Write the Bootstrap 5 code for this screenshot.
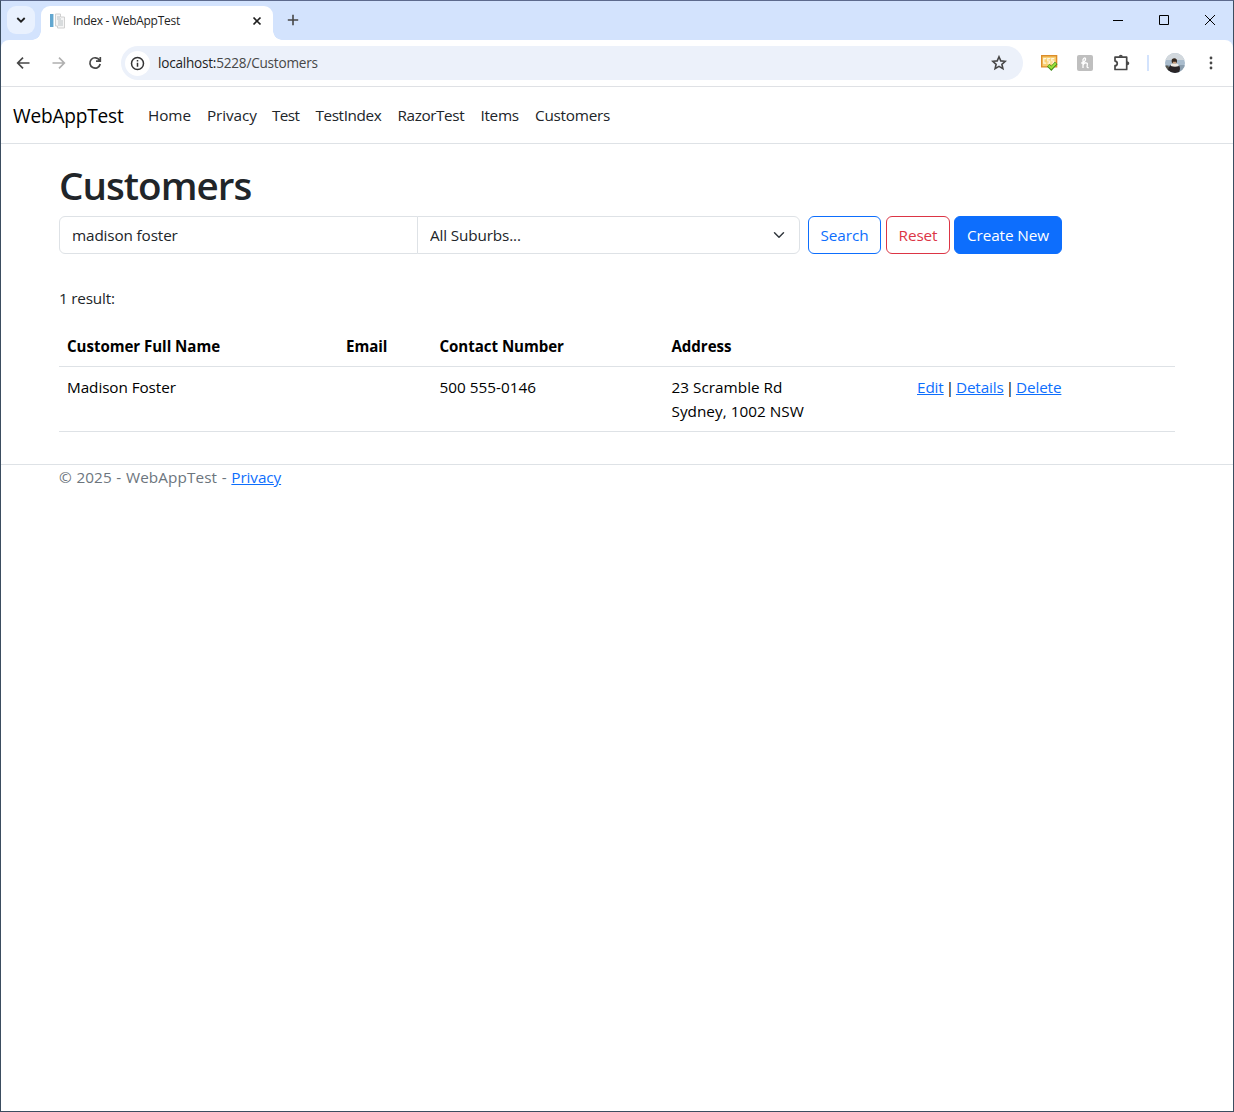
<!DOCTYPE html>
<html lang="en">
<head>
<meta charset="utf-8">
<meta name="viewport" content="width=device-width, initial-scale=1">
<title>Index - WebAppTest</title>
<link rel="stylesheet" href="https://cdn.jsdelivr.net/npm/bootstrap@5.3.0/dist/css/bootstrap.min.css">
<style>
:root { --bs-font-sans-serif: "Open Sans", "Noto Sans", sans-serif; }
body { font-family: "Open Sans", "Noto Sans", sans-serif; font-size: 15.3px; line-height: 24px; letter-spacing: -.08px; overflow: hidden; }
svg { display: block; flex: none; }
.app-window { height: 1112px; border: 1px solid #3b4d60; border-top-color: #5d6a8d; }
.tab-strip { height: 39px; background: #d3e3fd; font-size: 12px; letter-spacing: -.28px; line-height: 16px; }
.tab-menu { width: 28px; height: 28px; margin: 5px 6px 0 6px; border-radius: 9px; background: #e9f1fe; }
.page-tab { width: 232px; height: 34px; margin-top: 5px; border-radius: 9px 9px 0 0; background: #fff; padding: 0 11px 5px 9px; position: relative; color: #1f1f1f; }
.page-tab::before, .page-tab::after { content: ""; position: absolute; bottom: 0; width: 9px; height: 9px; }
.page-tab::before { left: -9px; background: radial-gradient(circle at 0 0, transparent 8.5px, #fff 9px); }
.page-tab::after { right: -9px; background: radial-gradient(circle at 100% 0, transparent 8.5px, #fff 9px); }
.page-icon { margin-right: 7px; }
.new-tab { margin: 13px 0 0 14px; }
.win-btn { width: 46px; height: 38px; }
.tool-wrap { background: #d3e3fd; }
.toolbar-row { height: 47px; background: #fff; border-bottom: 1px solid #dfe1e5; border-radius: 8px 8px 0 0; padding: 0 14px; }
.gap-tool { margin-left: 20px; }
.address-pill { width: 902px; height: 34px; border-radius: 17px; background: #ecf1fa; margin-left: 18px; padding: 0 16px 0 4px; font-size: 13.6px; letter-spacing: -.23px; color: #474747; }
.address-pill b { font-weight: 400; color: #1f1f1f; }
.info-dot { width: 25px; height: 25px; border-radius: 50%; background: #fff; margin-right: 8px; }
.tool-divider { width: 2px; height: 16px; margin: 0 16px; background: #d3e3fd; }
.site-nav { height: 57px; }
.navbar-brand { width: 111px; font-size: 19.1px; white-space: nowrap; letter-spacing: -.2px; padding-top: 7px; }
.site-nav .nav-link { color: #212529; white-space: nowrap; }
.site-nav .nav-item { letter-spacing: -.35px; }
.site-nav .nav-item:nth-child(1) { width: 59px; letter-spacing: -.08px; }
.site-nav .nav-item:nth-child(2) { width: 65px; letter-spacing: -.1px; }
.site-nav .nav-item:nth-child(3) { width: 43.5px; letter-spacing: -.6px; }
.site-nav .nav-item:nth-child(4) { width: 82px; letter-spacing: -.4px; }
.site-nav .nav-item:nth-child(5) { width: 83px; letter-spacing: -.4px; }
.site-nav .nav-item:nth-child(6) { width: 54.5px; letter-spacing: -.3px; }
.site-nav .nav-item:nth-child(7) { letter-spacing: -.24px; }
h1 { font-weight: 600; font-size: 38.6px; line-height: 50px !important; height: 48px; letter-spacing: -.98px; }
.filter-box { width: 741px; height: 38px; margin-right: 8px; }
.filter-box .form-control { flex: 0 0 359px; }
.form-control, .form-select, .btn { font-size: 15.3px; line-height: 24px; letter-spacing: -.14px; }
.form-control, .form-select { border-color: #dee2e6; height: 38px; }
.btn { padding-left: 0; padding-right: 0; white-space: nowrap; letter-spacing: -.08px; }
.b-search { width: 73px; margin-right: 5px; }
.b-reset { width: 64px; margin-right: 4px; }
.b-create { width: 108px; }
.count-line { letter-spacing: -.2px; }
.results { table-layout: fixed; color: #000; }
.results th { font-size: 15.1px; letter-spacing: -.05px; }
.results td:nth-child(n+3) { letter-spacing: .02px; }
.results td.row-links { word-spacing: -1.9px; letter-spacing: -.12px; }
.site-foot { color: #6c757d; word-spacing: .5px; letter-spacing: .1px; }
.site-foot a { letter-spacing: -.1px; }
</style>
<script src="https://cdn.jsdelivr.net/npm/bootstrap@5.3.0/dist/js/bootstrap.bundle.min.js"></script>
</head>
<body>
<div class="app-window">
  <div class="tab-strip d-flex">
    <div class="tab-menu d-flex align-items-center justify-content-center"><svg width="10" height="8" fill="none" stroke="#1f1f1f" stroke-width="1.8"><path d="M1.3 2 5 5.7 8.7 2"/></svg></div>
    <div class="page-tab d-flex align-items-center">
      <svg width="16" height="16" class="page-icon"><path d="M0 1h3v13H0z" fill="#62a7d0"/><path d="M3 1h1v13H3z" fill="#bbd9e8"/><path d="M5.5 1h5v3h4v11h-7v-2h-2z" fill="#f5f5f5" stroke="#d0d0d0"/><path d="M7 4h3M7 6h4M8 8h5M8 10h5M8 12h5" stroke="#bcc3c6"/></svg>
      <span class="flex-grow-1">Index - WebAppTest</span>
      <svg width="10" height="10" stroke="#1f1f1f" stroke-width="1.7"><path d="m1.5 1.5 7 7m0-7-7 7"/></svg>
    </div>
    <svg width="12" height="12" class="new-tab" stroke="#474747" stroke-width="1.6"><path d="M6 .8v10.4M.8 6h10.4"/></svg>
    <div class="d-flex ms-auto">
      <div class="win-btn d-flex align-items-center justify-content-center"><svg width="10" height="10" stroke="#000"><path d="M0 5.5h10"/></svg></div>
      <div class="win-btn d-flex align-items-center justify-content-center"><svg width="10" height="10" fill="none" stroke="#000"><path d="M.5.5h9v9h-9z"/></svg></div>
      <div class="win-btn d-flex align-items-center justify-content-center"><svg width="10" height="10" stroke="#000"><path d="m0 0 10 10m0-10L0 10"/></svg></div>
    </div>
  </div>
  <div class="tool-wrap">
    <div class="toolbar-row d-flex align-items-center">
      <svg width="16" height="16" fill="none" stroke="#474747" stroke-width="1.7"><path d="M14.5 8H3M8 2.7 2.7 8 8 13.3"/></svg>
      <svg width="16" height="16" class="gap-tool" fill="none" stroke="#b0b0b0" stroke-width="1.7"><path d="M1.5 8H13M8 2.7 13.3 8 8 13.3"/></svg>
      <svg width="16" height="16" class="gap-tool" fill="none" stroke="#474747" stroke-width="1.7"><path d="M12.5 5.2A5.2 5.2 0 1 0 13.2 9M13.3 1.9v4.3H9"/></svg>
      <div class="address-pill d-flex align-items-center">
        <div class="info-dot d-flex align-items-center justify-content-center"><svg width="15" height="15" fill="none" stroke="#333" stroke-width="1.5"><circle cx="7.5" cy="7.5" r="6"/><path d="M7.5 6.7v4M7.5 4.1v1.5"/></svg></div>
        <span class="flex-grow-1"><b>localhost:</b>5228/Customers</span>
        <svg width="16" height="16" fill="none" stroke="#474747" stroke-width="1.6"><path d="m8 1.8 1.8 4.1 4.5.4-3.4 3 1 4.4L8 11.4l-3.9 2.3 1-4.4-3.4-3 4.5-.4z"/></svg>
      </div>
      <svg width="17" height="17" style="margin-left:18px"><path d="M.7.7h14.9v11.2H.7z" fill="#f9cf72" stroke="#dc8d29" stroke-width="1.4"/><path d="M5.3 3.7H2.8v4.5h2.5M9.3 3.7H6.8V6h2v2.2H6.5M13.3 3.7h-2.5V6h2v2.2h-2.3" fill="none" stroke="#fff7df" stroke-width="1.2"/><path d="m7.3 10.2 3 3.2L15.2 8" fill="none" stroke="#438d19" stroke-width="3.5"/><path d="m7.6 10.4 2.7 2.5L14.8 8.3" fill="none" stroke="#9ce33c" stroke-width="2"/></svg>
      <svg width="16" height="16" style="margin-left:19px"><rect width="16" height="16" rx="2" fill="#bfbfbf"/><path d="M6 13V4.5Q7.5 2 8.5 3.5 9 5.5 6 7.8L4.2 8M6 10q1.2-2.5 3-2.2t1.3 2l-.2 2q0 1 1.6.8" fill="none" stroke="#fff" stroke-width="1.3"/></svg>
      <svg width="18" height="18" class="gap-tool" fill="none" stroke="#474747" stroke-width="1.7" stroke-linejoin="round"><path d="M2 3.2h11.7v12.3H2v-3.8c3-.2 3-4.4 0-4.6z"/><path d="M5.8 2.8c0-2.8 4-2.8 4 0M14 7.2c3 0 3 4 0 4" fill="#474747" stroke="none"/></svg>
      <div class="tool-divider"></div>
      <svg width="20" height="20"><defs><clipPath id="avatar"><circle cx="10" cy="10" r="10"/></clipPath></defs><g clip-path="url(#avatar)"><path d="M0 0h20v20H0z" fill="#a9bccd"/><path d="M0 0h20v7H0z" fill="#d2d8dd"/><path d="M0 12h20v8H0z" fill="#8b9eae"/><path d="M0 13q4-2 5 5H2z" fill="#59574e"/><circle cx="9.3" cy="8" r="2.7" fill="#35281f"/><path d="M8 8.7h3l.5 2h-4z" fill="#c69d7b"/><path d="M3 17q1-6 7-5 5-1 5 4l-1 4H6z" fill="#292426"/><path d="M6 11q3-1 7 0l1 2q-4 1.5-8 0z" fill="#eee9e3"/></g></svg>
      <svg width="6" height="16" style="margin-left:23px" fill="#474747"><circle cx="3" cy="3" r="1.4"/><circle cx="3" cy="8" r="1.4"/><circle cx="3" cy="13" r="1.4"/></svg>
    </div>
  </div>
  <nav class="site-nav navbar navbar-expand-sm border-bottom mb-3">
    <div class="container-fluid">
      <a class="navbar-brand" href="#">WebAppTest</a>
      <ul class="navbar-nav flex-grow-1">
        <li class="nav-item"><a class="nav-link" href="#">Home</a></li>
        <li class="nav-item"><a class="nav-link" href="#">Privacy</a></li>
        <li class="nav-item"><a class="nav-link" href="#">Test</a></li>
        <li class="nav-item"><a class="nav-link" href="#">TestIndex</a></li>
        <li class="nav-item"><a class="nav-link" href="#">RazorTest</a></li>
        <li class="nav-item"><a class="nav-link" href="#">Items</a></li>
        <li class="nav-item"><a class="nav-link" href="#">Customers</a></li>
      </ul>
    </div>
  </nav>
  <main class="container pb-3">
    <h1 class="mb-2">Customers</h1>
    <form class="d-flex mb-0">
      <div class="filter-box input-group flex-nowrap">
        <input class="form-control" type="text" value="madison foster">
        <select class="form-select"><option>All Suburbs...</option></select>
      </div>
      <button type="button" class="b-search btn btn-outline-primary">Search</button>
      <button type="button" class="b-reset btn btn-outline-danger">Reset</button>
      <a class="b-create btn btn-primary" href="#">Create New</a>
    </form>
    <p class="count-line mb-3 pt-2 mt-4">1 result:</p>
    <table class="results table mb-3">
      <colgroup><col style="width:279px"><col style="width:93.5px"><col style="width:232px"><col style="width:245.5px"><col></colgroup>
      <thead><tr><th>Customer Full Name</th><th>Email</th><th>Contact Number</th><th>Address</th><th></th></tr></thead>
      <tbody><tr><td>Madison Foster</td><td></td><td>500 555-0146</td><td>23 Scramble Rd<br>Sydney, 1002 NSW</td><td class="row-links"><a href="#">Edit</a> | <a href="#">Details</a> | <a href="#">Delete</a></td></tr></tbody>
    </table>
  </main>
  <footer class="site-foot border-top"><div class="container">&copy; 2025 - WebAppTest - <a href="#">Privacy</a></div></footer>
</div>
</body>
</html>
